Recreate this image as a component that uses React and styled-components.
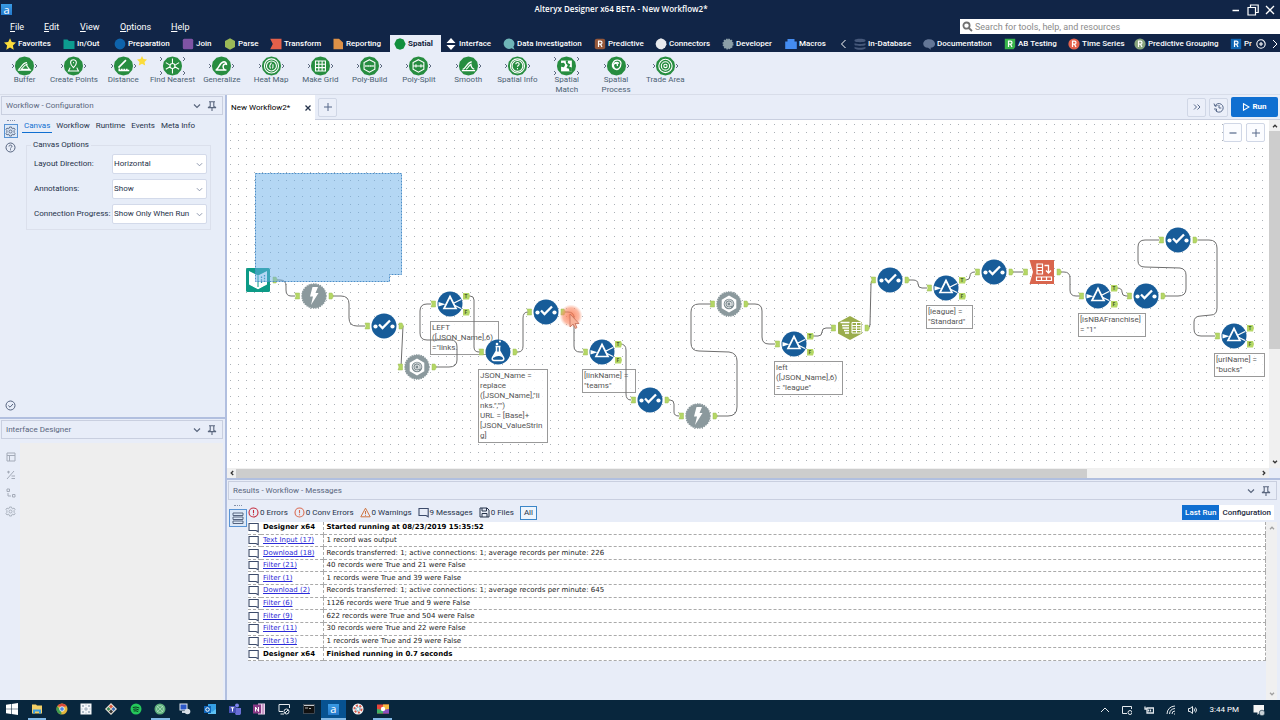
import React from 'react';
import styled, { createGlobalStyle, css } from 'styled-components';

const c = {
  navy: '#112547',
  panel: '#e8edf8',
  line: '#c9cfdf',
  edge: '#b1bfdf',
  blue: '#0f6fd1',
  slate: '#56688a',
  text: '#25324a',
  tool: '#175c99',
  grey: '#8b999d',
  port: '#b5d765',
};

const Global = createGlobalStyle`
  * { box-sizing: border-box; }
  body { margin: 0; background: ${c.panel}; }
  body, button, input, select, table, legend {
    font-family: Roboto, 'Open Sans', sans-serif;
    font-size: 8px;
    line-height: 10px;
    color: ${c.text};
  }
  button { border: 0; padding: 0; background: none; }
  svg { display: block; flex: none; }
`;

const App$ = styled.div`
  min-height: 100vh;
  display: flex;
  flex-direction: column;
`;

/* ---------- header ---------- */
const Header = styled.header`
  background: ${c.navy};
`;
const TitleBar = styled.div`
  display: flex;
  align-items: center;
  height: 19px;
  padding: 0 4px 0 1px;
`;
const Title = styled.h1`
  flex: 1;
  margin: 0;
  padding-bottom: 2px;
  text-align: center;
  color: #fff;
  font-family: 'Open Sans', sans-serif;
  font-size: 8px;
  font-weight: 600;
  line-height: 12px;
`;
const WindowButtons = styled.div`
  display: flex;
  gap: 5px;
`;
const MenuRow = styled.div`
  display: flex;
  justify-content: space-between;
  height: 16px;
`;
const Menu = styled.nav`
  display: flex;
  align-items: center;
  padding-left: 10px;
`;
const MenuItem = styled.button`
  width: ${(p) => p.$w}px;
  text-align: left;
  color: #fff;
  font-size: 9px;
  line-height: 12px;
`;
const SearchBox = styled.label`
  display: flex;
  align-items: center;
  gap: 2px;
  width: 25%;
  height: 15px;
  padding-left: 2px;
  background: #fff;
`;
const SearchInput = styled.input`
  flex: 1;
  min-width: 0;
  border: 0;
  padding: 0;
  font-size: 9px;
  outline: none;
  &::placeholder { color: #8a8a8a; opacity: 1; }
`;
const Categories = styled.nav`
  display: flex;
  height: 17px;
  overflow: hidden;
`;
const Category = styled.button`
  display: flex;
  align-items: center;
  flex: none;
  gap: 2px;
  width: ${(p) => p.$w}px;
  padding-left: 4px;
  overflow: hidden;
  white-space: nowrap;
  color: #fff;
  font-weight: 500;
  ${(p) => p.$active && css`
    background: ${c.panel};
    color: #14233c;
    font-weight: 700;
  `}
`;
const Palette = styled.div`
  display: grid;
  grid-template-columns: repeat(14, minmax(0, 1fr));
  width: 690px;
  height: 42px;
  padding-top: 4px;
`;
const PaletteBar = styled.div`
  background: ${c.panel};
  border-bottom: 1px solid #d8dde9;
`;
const Tool = styled.button`
  display: flex;
  flex-direction: column;
  align-items: center;
  justify-content: flex-start;
  gap: 0;
  color: #4b6173;
`;

/* ---------- workspace ---------- */
const Workspace = styled.div`
  flex: 1;
  display: grid;
  grid-template-columns: 227px minmax(0, 1fr);
`;
const Left = styled.aside`
  display: flex;
  flex-direction: column;
  border-right: 2px solid ${c.edge};
`;
const Panel = styled.section`
  display: flex;
  flex-direction: column;
  padding: 1px 2px 0 1px;
  ${(p) => (p.$grow ? css`flex: 1; border-bottom: 2px solid ${c.edge};` : css`min-height: 281px;`)}
`;
const PanelHeader = styled.div`
  display: flex;
  align-items: center;
  gap: 6px;
  height: 19px;
  padding: 0 5px 0 4px;
  border: 1px solid ${c.line};
  color: #59667d;
`;
const PanelTitle = styled.h2`
  flex: 1;
  margin: 0;
  font-size: 8px;
  font-weight: 400;
`;
const PanelBody = styled.div`
  flex: 1;
  display: flex;
`;
const Rail = styled.div`
  display: flex;
  flex-direction: column;
  align-items: center;
  width: 19px;
  gap: ${(p) => p.$gap || 2}px;
  padding: ${(p) => (p.$gap ? 11 : 5)}px 0 5px;
`;
const RailButton = styled.button`
  display: grid;
  place-items: center;
  flex: none;
  width: ${(p) => p.$size || 14}px;
  height: ${(p) => p.$size || 14}px;
  color: ${(p) => (p.$dim ? '#a4abb8' : '#56647f')};
  ${(p) => p.$active && css`border: 1px solid #5893d4; background: #dbe8f8;`}
  ${(p) => p.$last && css`margin-top: auto;`}
`;
const Grip = styled.div`
  width: 8px;
  height: 2px;
  border-top: 1px dotted #8390a8;
`;
const Config = styled.div`
  flex: 1;
  min-width: 0;
  padding: 5px 0 0 1px;
  background: #e7edf8;
`;
const SubTabs = styled.div`
  display: flex;
  gap: 2px;
  margin-right: 8px;
  padding-left: 1px;
`;
const SubTab = styled.button`
  height: 13px;
  padding: 0 2px 1px;
  white-space: nowrap;
  ${(p) => p.$active && css`color: ${c.blue}; border-bottom: 1px solid ${c.blue};`}
`;
const Options = styled.fieldset`
  margin: 7px 12px 0 5px;
  padding: 4px 3px 0 7px;
  border: 1px solid #dbe0ec;
`;
const Legend = styled.legend`
  margin-left: -3px;
  padding: 0 2px;
`;
const Field = styled.div`
  display: flex;
  align-items: center;
  justify-content: space-between;
  height: 20px;
  margin-bottom: 5px;
  white-space: nowrap;
`;
const SelectWrap = styled.div`
  position: relative;
  width: 95px;
`;
const SelectBox = styled.select`
  appearance: none;
  width: 100%;
  height: 20px;
  padding: 0 12px 1px 1px;
  border: 1px solid #d3daea;
  border-radius: 2px;
  background: #fff;
`;
const SelectMark = styled.span`
  position: absolute;
  right: 4px;
  top: 7px;
  pointer-events: none;
  color: #7f8aa3;
`;
const EmptyArea = styled.div`
  flex: 1;
  margin-top: 4px;
  background: #eeeeee;
`;

/* ---------- document area ---------- */
const Main = styled.main`
  display: flex;
  flex-direction: column;
  min-width: 0;
`;
const DocBar = styled.div`
  display: flex;
  align-items: center;
  gap: 3px;
  height: 25px;
  padding-right: 2px;
  border-bottom: 1px solid ${c.line};
`;
const DocTab = styled.div`
  display: flex;
  align-items: center;
  justify-content: space-between;
  width: 88px;
  height: 25px;
  margin-bottom: -1px;
  padding: 0 3px 0 4px;
  background: #fff;
  color: #000;
`;
const IconButton = styled.button`
  display: grid;
  place-items: center;
  width: 19px;
  height: 19px;
  border: 1px solid #d0d7e6;
  border-radius: 2px;
  background: ${(p) => (p.$white ? '#fbfcff' : '#ebeff9')};
  color: ${c.slate};
  ${(p) => p.$push && css`margin-left: auto;`}
`;
const RunButton = styled.button`
  display: flex;
  align-items: center;
  justify-content: center;
  gap: 2px;
  width: 47px;
  height: 20px;
  border-radius: 2px;
  background: ${c.blue};
  color: #fff;
  font-weight: 700;
`;
const CanvasRow = styled.div`
  flex: 1;
  display: flex;
  min-height: 347px;
`;
const Canvas = styled.div`
  position: relative;
  flex: 1;
  overflow: hidden;
  background-color: #fff;
  background-image: conic-gradient(from 90deg at 7px 7px, #aab0b6 90deg, transparent 0);
  background-size: 8px 8px;
  background-position: 4px 5px;
`;
const Wires = styled.svg`
  position: absolute;
  inset: 0;
  width: 100%;
  height: 100%;
  pointer-events: none;
`;
const Node = styled.div`
  position: absolute;
  left: ${(p) => p.$x - 22}px;
  top: ${(p) => p.$y - 14}px;
`;
const Note = styled.div`
  position: absolute;
  left: ${(p) => p.$x}px;
  top: ${(p) => p.$y}px;
  width: ${(p) => p.$w}px;
  padding: 1px;
  border: 1px solid #999;
  background: rgba(255, 255, 255, 0.8);
  color: #555;
  white-space: pre;
`;
const Zoom = styled.div`
  position: absolute;
  right: 4px;
  top: 3px;
  display: flex;
  gap: 4px;
`;
const VScroll = styled.div`
  display: flex;
  flex-direction: column;
  align-items: center;
  justify-content: space-between;
  width: 11px;
  padding: 3px 0;
  background: #f0f0f0;
  color: ${(p) => (p.$dim ? '#a0a0a0' : '#333')};
`;
const VThumb = styled.div`
  width: 11px;
  height: 218px;
  margin: 2px 0 auto;
  background: #cdcdcd;
`;
const HScroll = styled.div`
  display: flex;
  align-items: center;
  height: 10px;
  margin-right: 11px;
  padding: 0 2px;
  background: #f0f0f0;
  color: #333;
`;
const HThumb = styled.div`
  width: 82%;
  height: 9px;
  margin: 0 auto 0 1px;
  background: #cdcdcd;
`;

/* ---------- results ---------- */
const Results = styled.section`
  display: flex;
  flex-direction: column;
  height: 222px;
  padding: 1px 3px 0 1px;
  border-top: 2px solid ${c.edge};
`;
const ResultsBody = styled.div`
  flex: 1;
  display: flex;
`;
const ResultsMain = styled.div`
  flex: 1;
  display: flex;
  flex-direction: column;
  min-width: 0;
  padding: 4px 0 0 1px;
`;
const Filters = styled.div`
  display: flex;
  align-items: center;
  height: 17px;
  margin-bottom: 1px;
  padding-right: 3px;
  gap: 6px;
`;
const FilterButton = styled.button`
  display: flex;
  align-items: center;
  gap: 1px;
  white-space: nowrap;
  ${(p) => p.$box && css`
    padding: 1px 3px;
    border: 1px solid #3b86c8;
    background: #eef5fd;
  `}
`;
const Toggle = styled.div`
  display: flex;
  margin-left: auto;
`;
const ToggleButton = styled.button`
  height: 15px;
  padding: 0 3px;
  font-weight: 500;
  background: ${(p) => (p.$on ? c.blue : '#fff')};
  color: ${(p) => (p.$on ? '#fff' : '#1b2940')};
`;
const LogArea = styled.div`
  flex: 1;
  display: flex;
  align-items: flex-start;
  & > ${VScroll} { align-self: stretch; }
`;
const Log = styled.table`
  flex: 1;
  height: 139px;
  border-collapse: collapse;
  background: #fff;
  font-family: 'DejaVu Sans', sans-serif;
  font-size: 7px;
  line-height: 9px;
  color: #222;
  border-right: 1px dashed #aaa;
`;
const LogRow = styled.tr`
  border-bottom: 1px dashed #aaa;
  font-weight: ${(p) => (p.$bold ? 700 : 400)};
  color: ${(p) => (p.$bold ? '#000' : '#222')};
`;
const Cell = styled.td`
  width: ${(p) => (p.$w ? `${p.$w}px` : 'auto')};
  padding: 0 0 0 ${(p) => p.$pad}px;
  white-space: nowrap;
  ${(p) => p.$line && css`border-right: 1px dashed #aaa;`}
`;
const LogLink = styled.a`
  color: #2a2ad8;
  text-decoration: underline;
`;

/* ---------- taskbar ---------- */
const Taskbar = styled.footer`
  display: flex;
  justify-content: space-between;
  height: 20px;
  background: #08263d;
`;
const Apps = styled.div`
  display: grid;
  grid-template-columns: repeat(16, minmax(0, 1fr));
  width: 395px;
`;
const AppButton = styled.button`
  display: grid;
  place-items: center;
  margin: 0 ${(p) => (p.$on ? 0 : 3)}px;
  border-bottom: 2px solid ${(p) => (p.$open ? '#83b9e6' : 'transparent')};
  ${(p) => p.$on && css`background: #075291;`}
`;
const Tray = styled.div`
  display: flex;
  align-items: center;
  gap: 12px;
  padding-right: 15px;
  color: #e4e9ee;
`;
const Clock = styled.time`
  margin-right: 2px;
  color: #fff;
  white-space: nowrap;
`;

/* ---------- small drawings ---------- */
const Line = ({ d, s = 10, w = 1, vb = 10, fill = 'none' }) => (
  <svg width={s} height={s} viewBox={`0 0 ${vb} ${vb}`} fill={fill} stroke="currentColor" strokeWidth={w} aria-hidden="true">
    <path d={d} />
  </svg>
);
const Chevron = () => <Line s={8} vb={8} w={1.2} d="M1 2.500 L4 5.500 L7 2.500" />;
const Pin = () => <Line d="M2 .8H8M3.200 1V5.500L1 6.600H9L6.800 5.500V1M5 7V10" w={1.1} />;
const Arrow = ({ d }) => <Line s={6} vb={6} w={1.3} d={d} />;
const Gear = () => (
  <svg width="11" height="11" viewBox="0 0 22 22" fill="none" stroke="currentColor" strokeWidth="1.8" aria-hidden="true">
    <path d="M9 2h4l.7 2.700 1.900.8L18 4l2 3-1.800 2v3.800L20 15l-2 3-2.500-1.500-1.800.8L13 20H9l-.7-2.700-1.900-.8L4 18l-2-3 1.800-2.200V9L2 7l2-3 2.500 1.500 1.800-.8Z" />
    <circle cx="11" cy="11" r="3" />
  </svg>
);

const catIcons = {
  star: <path fill="#fbdc3b" d="M6 .3 7.800 4.100 12 4.600 8.900 7.500 9.700 11.700 6 9.600 2.300 11.700 3.100 7.500 0 4.600 4.200 4.100Z" />,
  folder: <path fill="#0d9c90" d="M.5 1.500H4.500L6 3H11.500V11H.5Z" />,
  circle: <circle cx="6" cy="6" r="5.400" fill="#0e63ab" />,
  square: <rect x=".8" y=".8" width="10.400" height="10.400" rx="1.500" fill="#7f54a4" />,
  hex: <path fill="#9bb957" d="M6 .2 11 3V9L6 11.800 1 9V3Z" />,
  flag: <path fill="#e4604a" d="M.2.8H11.500V11.200H.2L2.800 6Z" />,
  doc: <path fill="#dd9147" d="M1.500.8H7L11 4.500V11.200H1.500Z" />,
  deca: <path fill="#128f3d" d="M6 .3 9.500 1.600 11.700 6 9.500 10.400 6 11.700 2.500 10.400.3 6 2.500 1.600Z" />,
  updown: <path fill="#fff" d="M6 0 10.500 5H1.500ZM1.500 7H10.500L6 12Z" />,
  magnifier: <path fill="#6fb5b8" d="M6 .4a5.300 5.300 0 1 0 2.600 9.900L11.600 11.700 10.400 8.800A5.300 5.300 0 0 0 6 .4Z" />,
  cloud: <path fill="#e8eaee" d="M3.500 1.200 6 .3 9 1.500 11 3.500 11.500 6.500 10 9.500 7 11.500 4 10.900 1.500 9 .6 6 1.500 3Z" />,
  cog: <circle cx="6" cy="6" r="4.800" fill="#8c9fa8" stroke="#8c9fa8" strokeWidth="1.400" strokeDasharray="1.500 1" />,
  box: <path fill="#448cf0" d="M2.500 1H9.500V3.500H11.800V11H.2V3.500H2.500Z" />,
  db: (
    <g fill="#46587a">
      <path d="M.5 2.200C.5.200 11.500.200 11.500 2.200V3C11.500 4.600.5 4.600.5 3Z" />
      <path d="M.5 5.200C3 6.200 9 6.200 11.500 5.200V7C9 8.200 3 8.200.5 7Z" />
      <path d="M.5 9C3 10 9 10 11.500 9V10.500C9 12.200 3 12.200.5 10.500Z" />
    </g>
  ),
  bubble: <path fill="#637696" d="M6 1.200C13.800 1.200 13.800 9.800 7.500 9.800L8 11.800 5 9.800C-1.800 9.500-1.200 1.200 6 1.200Z" />,
};
const rShapes = {
  brown: <rect x=".8" y=".8" width="10.400" height="10.400" rx="2" fill="#96583a" />,
  green: <path fill="#37b54a" d="M.8.800H11.200V9L9.500 11.200H.8Z" />,
  red: <circle cx="6" cy="6" r="5.600" fill="#e5624d" />,
  sage: <circle cx="6" cy="6" r="5.600" fill="#88a57d" />,
  blue: <rect x=".8" y=".8" width="10.400" height="10.400" fill="#0f67b4" />,
};
const CatIcon = ({ name }) => (
  <svg width="12" height="12" viewBox="0 0 12 12" aria-hidden="true">
    {catIcons[name] || rShapes[name]}
    {rShapes[name] && (
      <path d="M4.500 9V3.200H6.500a1.500 1.500 0 0 1 0 3H4.500M6.500 6.200 8 9" fill="none" stroke="#fff" strokeWidth="1.200" />
    )}
  </svg>
);

const categories = [
  ['star', 'Favorites', 59],
  ['folder', 'In/Out', 51],
  ['circle', 'Preparation', 68],
  ['square', 'Join', 42],
  ['hex', 'Parse', 46],
  ['flag', 'Transform', 62],
  ['doc', 'Reporting', 62],
  ['deca', 'Spatial', 51],
  ['updown', 'Interface', 58],
  ['magnifier', 'Data Investigation', 91],
  ['brown', 'Predictive', 61],
  ['cloud', 'Connectors', 67],
  ['cog', 'Developer', 63],
  ['box', 'Macros', 54],
  ['prev', '', 15],
  ['db', 'In-Database', 69],
  ['bubble', 'Documentation', 81],
  ['green', 'AB Testing', 64],
  ['red', 'Time Series', 66],
  ['sage', 'Predictive Grouping', 96],
  ['blue', 'Pr', 26],
];

const glyphs = {
  buffer: <path d="M5 16c3-1 4-8 10-8M8 16c2-1 3-5 7-6v2l3 4ZM4 17h16" />,
  point: <path d="M12 4.500a3.500 3.500 0 0 1 3.500 3.500c0 2.500-3.500 6-3.500 6S8.500 10.500 8.500 8A3.500 3.500 0 0 1 12 4.500ZM8 14l-2 4h12l-2-4M11.500 8h1" />,
  distance: <path d="M6 14 15 5M6 17.500h13M7 15v3M10 15.500v2M13 15.500v2M16 15.500v2" strokeWidth="2" />,
  nearest: <path d="M12 9a3 3 0 1 1 0 6 3 3 0 0 1 0-6M12 3v6M12 15v6M4 8l5 3M15 13l5 3M20 8l-5 3M9 13l-5 3" />,
  wave: <path d="M5 17c4-1 4-9 10-10 2 0 3 2 3 3-3-1-4 1-4 3 0 2 2 4 4 4Z" strokeWidth="1.800" />,
  smooth: <path d="M4 17.500h16M5 16c5-1 5-9 11-9M9 16c3-1 3-5 6-6 0 3 1 5 4 6" strokeWidth="1.500" />,
  heat: <path d="M12 3.500a8.500 8.500 0 1 1 0 17 8.500 8.500 0 0 1 0-17M12 6a6 6 0 1 1 0 12 6 6 0 0 1 0-12M12 8c-2 3-3 4-1 7M14 10c-1 2 1 3-1 5" />,
  grid: <path d="M6 6h12v12H6ZM10 6v12M14 6v12M6 10h12M6 14h12" />,
  build: <path d="M12 4.500 18.500 8v8L12 19.500 5.500 16V8ZM7 12h10M7.500 11v2M10.500 11v2M13.500 11v2M16.500 11v2" />,
  split: <path d="M12 4.500 18.500 8v8L12 19.500 5.500 16V8ZM5 12h14M9 10v4M15 10v4" />,
  info: <path d="M12 3.500a8.500 8.500 0 1 1 0 17 8.500 8.500 0 0 1 0-17M12 5.500a6.500 6.500 0 1 1 0 13 6.500 6.500 0 0 1 0-13M10 10c0-3 4.500-2.500 4 0-.3 1.500-2 1.500-2 3M12 14.500v1.500" />,
  match: (
    <g stroke="none">
      <path fill="#fff" d="M5.500 5.500h13v13h-13Z" />
      <path fill="#278d40" d="M5.500 8.500 9 8l1.500 2.500L9 13.500l-3.500-.500ZM11 5.500h3l-.500 3 3 1.500-1 3 3 1v4.500h-3l-.500-3-3-1 1.500-3.500-2-2Z" />
    </g>
  ),
  process: <path d="M13 5a4 4 0 0 1 4 6 5 5 0 1 1-9-3 5 5 0 0 1 5-3M15 9a4 4 0 1 0 0 6M10 8a3 3 0 0 1 3 4" strokeWidth="1.600" />,
  trade: <path d="M12 4a8 8 0 1 1 0 16 8 8 0 0 1 0-16M12 7a5 5 0 1 1 0 10 5 5 0 0 1 0-10M12 10a2 2 0 1 1 0 4 2 2 0 0 1 0-4" />,
};
const tools = [
  ['buffer', 'Buffer'],
  ['point', 'Create Points'],
  ['distance', 'Distance', 'star'],
  ['nearest', 'Find Nearest', 'four'],
  ['wave', 'Generalize'],
  ['heat', 'Heat Map'],
  ['grid', 'Make Grid'],
  ['build', 'Poly-Build'],
  ['split', 'Poly-Split'],
  ['smooth', 'Smooth'],
  ['info', 'Spatial Info'],
  ['match', 'Spatial\nMatch', 'four'],
  ['process', 'Spatial\nProcess'],
  ['trade', 'Trade Area'],
];
const ToolLabel = styled.span`
  margin-top: -1px;
  white-space: pre;
  text-align: center;
`;
const ToolIcon = ({ name, extra }) => (
  <svg width="49" height="20" viewBox="0 0 49 20" fill="none" aria-hidden="true">
    <g transform="translate(14.500 0) scale(.83)">
      <path d="M12 .5 18 2 22.500 7 23.500 12 22.500 17 18 22 12 23.500 6 22 1.500 17 .5 12 1.500 7 6 2Z" fill="#278d40" />
      <g stroke="#fff" strokeWidth="1.300">{glyphs[name]}</g>
    </g>
    <path
      stroke="#5d6a80"
      d={extra === 'four'
        ? 'M12 1l2 2-2 2M12 15l2 2-2 2M35 1l2 2-2 2M35 15l2 2-2 2'
        : 'M12 8l2 2-2 2M35 8l2 2-2 2'}
    />
    {extra === 'star' && (
      <path fill="#fbdc3b" d="M43 0 44.500 3 48 3.500 45.500 6 46.200 9.500 43 7.800 39.800 9.500 40.500 6 38 3.500 41.500 3Z" />
    )}
  </svg>
);

/* canvas tools, drawn around the centre of a 44 x 28 box */
const discs = {
  select: (
    <g>
      <circle cx="22" cy="14" r="12.500" fill={c.tool} />
      <circle cx="13.500" cy="14.500" r="2.100" fill="#fff" />
      <circle cx="30.500" cy="14.500" r="2.100" fill="#fff" />
      <path d="M17 12.500 20.500 16 28 8.500" fill="none" stroke="#fff" strokeWidth="2.300" />
    </g>
  ),
  filter: (
    <g stroke="#fff" fill="none">
      <circle cx="22" cy="14" r="12.500" fill={c.tool} stroke="none" />
      <path d="M22 6.500 28 18.500H16Z" strokeWidth="1.700" />
      <path d="M10.500 12 17.500 14.200 10.500 16.500Z" fill="#fff" stroke="none" />
      <path d="M26 13 33 9.500M27 15.500 33 18.500" strokeWidth="1.300" />
    </g>
  ),
  download: (
    <g>
      <circle cx="22" cy="14" r="12" fill={c.grey} stroke={c.grey} strokeWidth="1.400" strokeDasharray="1.400 .9" />
      <path d="M20.500 5H26L23.500 11H26.500L19 23 21 14.500H18Z" fill="#fff" />
    </g>
  ),
  json: (
    <g fill="none" stroke="#fff">
      <circle cx="22" cy="14" r="12" fill={c.grey} stroke={c.grey} strokeWidth="1.400" strokeDasharray="1.400 .9" />
      <path d="M22 5.500 29.300 9.700V18.300L22 22.500 14.700 18.300V9.700Z" fill="#fff" stroke="none" />
      <circle cx="22" cy="14" r="5.300" fill="#7d8b90" stroke="none" />
      <path d="M24 17.200A3.900 3.900 0 1 1 25.900 14C25.900 16 24 15.800 24 14.500V12.300M24 14a2 2 0 1 1-4 0 2 2 0 0 1 4 0" stroke="#fff" strokeWidth=".8" />
    </g>
  ),
  formula: (
    <g fill="none" stroke="#fff">
      <circle cx="22" cy="14" r="12.500" fill={c.tool} stroke="none" />
      <path d="M20.500 9V13L16.500 19.500C15.500 21.500 17 22.500 18 22.500H26C27 22.500 28.500 21.500 27.500 19.500L23.500 13V9M19.500 8.500H24.500" strokeWidth="1.500" />
      <path d="M20 13.500H24L27 19.500C22 17 21 18 17 20Z" fill="#fff" stroke="none" />
      <circle cx="21" cy="6" r="1.300" fill="#fff" stroke="none" />
      <circle cx="24" cy="3.500" r="1" fill="#fff" stroke="none" />
    </g>
  ),
  input: (
    <g>
      <rect x="10" y="2" width="24" height="24" rx="1.500" fill="#0c9a86" />
      <path d="M13 5 22 9.500 31 5V18.500L22 23.500 13 18.500Z" fill="#fff" />
      <path d="M22 9.500V21M15 20.500 22 24 29 20.500" fill="none" stroke="#0c9a86" />
      <path d="M25.500 10.500V17M28.500 9V15.500" stroke="#2b8fa8" strokeWidth="1.300" strokeDasharray="1.500 1.200" />
    </g>
  ),
  columns: (
    <g fill="none" stroke="#fff">
      <path d="M22 2 34 8.500V19.500L22 26 10 19.500V8.500Z" fill="#9aad4b" stroke="none" />
      <path d="M12.500 8.500H21.500M14 11.500H21M14.500 14H21M16 16.500H21M17 19H21" strokeWidth="1.500" />
      <path d="M24 8.500H33V19H24ZM24 11.500H33M24 14H33M24 16.500H33M28.500 8.500V19" />
    </g>
  ),
  transpose: (
    <g fill="none" stroke="#fff">
      <path d="M9.500 2H34V26H9.500L13 14Z" fill="#d9654d" stroke="none" />
      <path d="M17 6H22.500V16H17ZM17 9.500H22.500M17 12.500H22.500M16.500 19H31.500V22.500H16.500ZM21.500 19V22.500M26.500 19V22.500" strokeWidth="1.200" />
      <path d="M24.500 7.500H28.500V14.500M26 12.500 28.500 15 31 12.500" strokeWidth="1.300" />
    </g>
  ),
};
const PortMark = styled.text`
  font: 700 5px 'Open Sans', sans-serif;
  fill: #4a5c2a;
`;
const ToolNode = ({ kind, x, y }) => (
  <Node $x={x} $y={y}>
    <svg width="44" height="28" viewBox="0 0 44 28" aria-hidden="true">
      {kind !== 'input' && <path d="M3 11H7.500V17H3L4 14Z" fill={c.port} stroke="#9fbd59" strokeWidth=".5" />}
      {kind === 'filter' ? (
        <g>
          <path d="M35 3H41L42 6 41 9.500H35Z M35 19H41L42 22 41 25.500H35Z" fill={c.port} />
          <PortMark x="36.500" y="8">T</PortMark>
          <PortMark x="36.500" y="24">F</PortMark>
        </g>
      ) : (
        <path d="M37 11H40L41.500 14 40 17H37Z" fill={c.port} stroke="#9fbd59" strokeWidth=".5" />
      )}
      {discs[kind]}
    </svg>
  </Node>
);

const nodes = [
  ['input', 31, 160],
  ['download', 87, 176],
  ['select', 157, 206],
  ['json', 190, 247],
  ['filter', 223, 184],
  ['formula', 271, 232],
  ['select', 319, 192],
  ['filter', 375, 232],
  ['select', 423, 280],
  ['download', 471, 296],
  ['json', 502, 184],
  ['filter', 567, 224],
  ['columns', 623, 208],
  ['select', 663, 160],
  ['filter', 719, 168],
  ['select', 767, 152],
  ['transpose', 815, 152],
  ['filter', 871, 176],
  ['select', 919, 176],
  ['select', 951, 120],
  ['filter', 1007, 216],
];
const notes = [
  [203, 201, 69, 'LEFT\n([JSON_Name],6)\n="links.'],
  [251, 249, 70, 'JSON_Name =\nreplace\n([JSON_Name],"li\nnks.","")\nURL = [Base]+\n[JSON_ValueStrin\ng]'],
  [355, 249, 54, '[linkName] =\n"teams"'],
  [547, 241, 69, 'left\n([JSON_Name],6)\n= "league"'],
  [699, 185, 47, '[league] =\n"Standard"'],
  [851, 193, 68, '[isNBAFranchise]\n= "1"'],
  [987, 233, 51, '[urlName] =\n"bucks"'],
];
const wires = [
  'M50 160H53Q59 160 59 166V170Q59 176 64 176H68',
  'M105 176H114Q122 176 122 184V198Q122 206 130 206H138',
  'M176 206L174 247',
  'M209 247H222Q230 247 230 240V227Q230 220 224 220H200Q193 220 193 213V191Q193 184 200 184H204',
  'M241 176H243Q247 176 247 180V227Q247 232 252 232H254',
  'M290 232H291Q296 232 296 226V198Q296 192 301 192H302',
  'M337 192H341Q347 192 347 198V226Q347 232 353 232H356',
  'M393 224Q399 224 399 230V274Q399 280 404 280',
  'M441 280H443Q447 280 447 284V292Q447 296 452 296',
  'M489 296H501Q510 296 510 287V241Q510 233 502 232L472 231Q464 231 464 223V192Q464 184 472 184H485',
  'M521 184H528Q535 184 535 191V217Q535 224 542 224H548',
  'M586 216H591Q595 216 595 212Q595 208 599 208H605',
  'M641 208Q643 208 643 204L644 164Q644 160 646 160',
  'M681 160H686Q691 160 691 164Q691 168 695 168H700',
  'M738 160H739Q743 160 743 156Q743 152 748 152',
  'M786 152H796',
  'M834 152H837Q843 152 843 158V170Q843 176 849 176H853',
  'M890 168Q895 168 895 172Q895 176 899 176H901',
  'M937 176H951Q959 176 959 169V155Q959 149 953 148L918 147Q911 147 911 141V127Q911 120 918 120H932',
  'M971 120H982Q990 120 990 128V188Q990 195 984 195L974 196Q967 196 967 202V209Q967 216 974 216H988',
];

const log = [
  ['Designer x64', 'Started running at 08/23/2019 15:35:52', true],
  ['Text Input (17)', '1 record was output'],
  ['Download (18)', 'Records transferred: 1; active connections: 1; average records per minute: 226'],
  ['Filter (21)', '40 records were True and 21 were False'],
  ['Filter (1)', '1 records were True and 39 were False'],
  ['Download (2)', 'Records transferred: 1; active connections: 1; average records per minute: 645'],
  ['Filter (6)', '1126 records were True and 9 were False'],
  ['Filter (9)', '622 records were True and 504 were False'],
  ['Filter (11)', '30 records were True and 22 were False'],
  ['Filter (13)', '1 records were True and 29 were False'],
  ['Designer x64', 'Finished running in 0.7 seconds', true],
];
const Tint = styled.span`
  color: ${(p) => p.$c};
`;
const Message = () => <Tint $c="#3c4b6b"><Line s={11} vb={11} w={1.100} d="M1 1.500H10.200V9.800L8 8.500H1Z" /></Tint>;
const Alert = ({ color }) => (
  <Tint $c={color}><Line s={11} vb={11} d="M5.500 1a4.500 4.500 0 1 1 0 9 4.500 4.500 0 0 1 0-9M5.500 3V6.200M5.500 7.200V8.200" w={1.100} /></Tint>
);

const apps = [
  ['Start', <path fill="#fff" d="M0 1.700 5 1V5.700H0ZM5.600.9 12 0V5.700H5.600ZM0 6.300H5V11L0 10.300ZM5.600 6.300H12V12L5.600 11.100Z" />],
  ['File Explorer', <><path fill="#f3cf66" d="M1 1.500H5L6 2.500H11V10.500H1Z" /><path fill="#3f9fe0" d="M2 6.500H10V10.500H8V8.500H4V10.500H2Z" /></>, true],
  ['Chrome', <><circle cx="6" cy="6" r="5.500" fill="#e3b63b" /><path fill="#d9483b" d="M1.200 3.200A5.500 5.500 0 0 1 10.800 3.200L6 4Z" /><path fill="#3f9d51" d="M1.200 3.200 5 7.500 5.500 11.500A5.500 5.500 0 0 1 1.200 3.200" /><circle cx="6" cy="6" r="2.300" fill="#4b86e0" stroke="#fff" strokeWidth=".8" /></>],
  ['Tableau', <><rect x=".5" y=".5" width="11" height="11" fill="#f5f7fa" /><path d="M6 4V8M4 6H8M3 2V4M2 3H4M9 2V4M8 3H10M3 8V10M2 9H4M9 8V10M8 9H10M6 1.500V2.500M6 9.500V10.500M1.500 6H2.500M9.500 6H10.500" stroke="#6f879c" strokeWidth=".6" /></>],
  ['Git', <><path fill="#eee6da" d="M6 0 12 6 6 12 0 6Z" /><path fill="#d8583f" d="M6 1.500 8 3.500 6 5.500 4 3.500Z" /><path fill="#3f8a58" d="M3.500 4 5.500 6 3.500 8 1.500 6Z" /><path fill="#3c6cb5" d="M8.500 4 10.500 6 8.500 8 6.500 6Z" /><path fill="#333" d="M6 6.500 8 8.500 6 10.500 4 8.500Z" /></>],
  ['Spotify', <><circle cx="6" cy="6" r="5.500" fill="#25c95b" /><path d="M2.800 4.500Q6 3.300 9.300 5M3.200 6.300Q6 5.300 8.700 6.900M3.600 8Q6 7.300 8.200 8.600" fill="none" stroke="#0a3a20" /></>],
  ['Atom', <><circle cx="6" cy="6" r="5.500" fill="#5fb17c" /><circle cx="6" cy="6" r="3.500" fill="none" stroke="#b7e3c6" strokeWidth=".7" /><path d="M3 3 9 9M9 3 3 9" stroke="#b7e3c6" strokeWidth=".7" /></>, true],
  ['Remote', <><rect x="1" y="1" width="7" height="6" fill="#2b58c9" stroke="#dfe6f0" /><rect x="3" y="8" width="5" height="2" fill="#c9d3dd" /><circle cx="8.500" cy="8.500" r="2.800" fill="#d8dfe6" /></>],
  ['Outlook', <><rect x="4" y="1" width="8" height="10" fill="#35a0e4" /><path d="M4 6 8 9 12 6V11H4Z" fill="#5fc1f2" /><rect x="0" y="3" width="7" height="7" fill="#0f64b8" /><circle cx="3.500" cy="6.500" r="1.800" fill="none" stroke="#fff" /></>],
  ['Teams', <><circle cx="8" cy="2.500" r="2" fill="#7b83eb" /><path d="M6 5H12V9A3 3 0 0 1 6 10Z" fill="#6a6fd6" /><rect x="0" y="3" width="7" height="7" fill="#4751b5" /><path d="M1.800 4.800H5.200M3.500 4.800V8.500" stroke="#fff" /></>],
  ['OneNote', <><rect x="5" y=".5" width="7" height="11" fill="#e8cfe8" /><rect x="0" y="1.500" width="8" height="9" fill="#8a3a86" /><path d="M2.500 8.500V4L5.500 8.500V4" fill="none" stroke="#fff" /><path d="M10 1V11" stroke="#a86aa8" /></>],
  ['Display', <><path d="M5 8.500H1V1.500H11.500V5" fill="none" stroke="#e4e9ee" /><circle cx="8.500" cy="8.500" r="2.500" fill="none" stroke="#e4e9ee" /><path d="M2.500 11H6M7 10 10 7" stroke="#e4e9ee" /></>],
  ['Terminal', <><rect x=".5" y="1.500" width="11" height="9" fill="#111" stroke="#5f676f" strokeWidth=".6" /><path d="M1 2.500H11" stroke="#c5cacf" /><path d="M2 5H5M6 5.500H8" stroke="#ddd" strokeWidth=".8" /></>],
  ['Alteryx', 'a', true, true],
  ['Slack', <><circle cx="6" cy="6" r="5.500" fill="#f2f4f5" /><circle cx="6" cy="6" r="3.500" fill="none" stroke="#d8574a" strokeWidth="2" strokeDasharray="2 1.500" /><circle cx="6" cy="6" r="2" fill="none" stroke="#3a9bb5" strokeDasharray="1.500 1" /></>],
  ['Recorder', <><rect x="0" y="1.500" width="12" height="9" fill="#e7463c" /><path d="M6 1.500H12V6L6 8Z" fill="#f4b942" /><path d="M0 6 6 7 6 10.500H0Z" fill="#3fb165" /><path d="M12 6V10.500H6V7Z" fill="#8a4fc0" /><circle cx="6" cy="6" r="2.200" fill="#fff" /></>, true],
];
const Badge = styled.span`
  display: grid;
  place-items: center;
  width: 11px;
  height: 11px;
  background: linear-gradient(#3a9be4, #2479cc);
  color: #fff;
  font-family: 'Open Sans', sans-serif;
  font-size: 11px;
  line-height: 8px;
`;

const fields = [
  ['layout', 'Layout Direction:', 'Horizontal'],
  ['annotations', 'Annotations:', 'Show'],
  ['progress', 'Connection Progress:', 'Show Only When Run'],
];

const UP = 'M1 4.200 3 2.200 5 4.200';
const DOWN = 'M1 1.800 3 3.800 5 1.800';

export default function App() {
  return (
    <App$>
      <Global />
      <Header>
        <TitleBar>
          <Badge>a</Badge>
          <Title>Alteryx Designer x64 BETA - New Workflow2*</Title>
          <WindowButtons>
            <MenuItem $w={12} aria-label="Minimize"><Line s={12} vb={12} w={1.500} d="M2.500 6.500H9" /></MenuItem>
            <MenuItem $w={12} aria-label="Restore"><Line s={12} vb={12} w={1.200} d="M1 3.500H8.500V11H1ZM3.500 3.500V1H11.200V8.500H8.500" /></MenuItem>
            <MenuItem $w={12} aria-label="Close"><Line s={12} vb={12} w={1.300} d="M2 2 10 10M10 2 2 10" /></MenuItem>
          </WindowButtons>
        </TitleBar>
        <MenuRow>
          <Menu>
            <MenuItem $w={34}><u>F</u>ile</MenuItem>
            <MenuItem $w={36}><u>E</u>dit</MenuItem>
            <MenuItem $w={40}><u>V</u>iew</MenuItem>
            <MenuItem $w={51}><u>O</u>ptions</MenuItem>
            <MenuItem $w={30}><u>H</u>elp</MenuItem>
          </Menu>
          <SearchBox>
            <Tint $c="#707070"><Line s={11} vb={11} w={1.800} d="M4.500 1.500a3 3 0 1 1 0 6.200 3 3 0 0 1 0-6.200M6.800 7 10 10" /></Tint>
            <SearchInput type="search" aria-label="Search" placeholder="Search for tools, help, and resources" />
          </SearchBox>
        </MenuRow>
        <Categories>
          {categories.map(([icon, label, w]) => (
            <Category key={icon} $w={w} $active={label === 'Spatial'} aria-label={label || 'Previous'}>
              {icon === 'prev' ? <Line d="M6.500 1 2.500 5 6.500 9" /> : <CatIcon name={icon} />}
              {label}
            </Category>
          ))}
          <Category $w={14} aria-label="Add category">
            <Line d="M5 .8a4.200 4.200 0 1 1 0 8.400 4.200 4.200 0 0 1 0-8.400M5 3V7M3 5H7" w={1.100} />
          </Category>
          <Category $w={14} aria-label="Next"><Line d="M3 1 7 5 3 9" /></Category>
        </Categories>
        <PaletteBar>
          <Palette>
            {tools.map(([icon, label, extra]) => (
              <Tool key={label}>
                <ToolIcon name={icon} extra={extra} />
                <ToolLabel>{label}</ToolLabel>
              </Tool>
            ))}
          </Palette>
        </PaletteBar>
      </Header>

      <Workspace>
        <Left>
          <Panel $grow>
            <PanelHeader>
              <PanelTitle>Workflow - Configuration</PanelTitle>
              <Chevron />
              <Pin />
            </PanelHeader>
            <PanelBody>
              <Rail>
                <Grip />
                <RailButton $active aria-label="Settings"><Gear /></RailButton>
                <RailButton aria-label="Help">
                  <Line s={11} vb={11} d="M5.500 1a4.500 4.500 0 1 1 0 9 4.500 4.500 0 0 1 0-9M4 4.500C4 2.500 7 2.800 7 4.300 7 5.300 5.500 5.300 5.500 6.500M5.500 7.300V8.300" />
                </RailButton>
                <RailButton $last aria-label="Validate">
                  <Line s={11} vb={11} d="M5.500 1a4.500 4.500 0 1 1 0 9 4.500 4.500 0 0 1 0-9M3.300 5.500 5 7.200 8 4" />
                </RailButton>
              </Rail>
              <Config>
                <SubTabs role="tablist">
                  {['Canvas', 'Workflow', 'Runtime', 'Events', 'Meta Info'].map((t, i) => (
                    <SubTab key={t} role="tab" $active={i === 0}>{t}</SubTab>
                  ))}
                </SubTabs>
                <Options>
                  <Legend>Canvas Options</Legend>
                  {fields.map(([id, label, value]) => (
                    <Field key={id}>
                      <label htmlFor={id}>{label}</label>
                      <SelectWrap>
                        <SelectBox id={id}><option>{value}</option></SelectBox>
                        <SelectMark><Line s={7} vb={8} d="M1 2.500 4 5.500 7 2.500" /></SelectMark>
                      </SelectWrap>
                    </Field>
                  ))}
                </Options>
              </Config>
            </PanelBody>
          </Panel>
          <Panel>
            <PanelHeader>
              <PanelTitle>Interface Designer</PanelTitle>
              <Chevron />
              <Pin />
            </PanelHeader>
            <PanelBody>
              <Rail $gap={4}>
                <RailButton $dim aria-label="Layout view"><Line d="M1 1H9V9H1ZM1 3.500H9M3.500 3.500V9" /></RailButton>
                <RailButton $dim aria-label="Test view"><Line d="M1 9 8 1M1 2H4M2.500 .8V3.500M5.500 6H9M5.500 8.500H9" /></RailButton>
                <RailButton $dim aria-label="Tree view"><Line d="M1 1H3.500V3.500H1ZM6.500 6.500H9V9H6.500ZM2 5V8H5" /></RailButton>
                <RailButton $dim aria-label="Properties"><Gear /></RailButton>
              </Rail>
              <EmptyArea />
            </PanelBody>
          </Panel>
        </Left>

        <Main>
          <DocBar>
            <DocTab>
              New Workflow2*
              <button aria-label="Close tab"><Line s={8} vb={8} w={1.300} d="M1.500 1.500 6.500 6.500M6.500 1.500 1.500 6.500" /></button>
            </DocTab>
            <IconButton aria-label="New tab"><Line d="M5 1V9M1 5H9" /></IconButton>
            <IconButton $push aria-label="More"><Line s={8} vb={8} d="M1 1.500 3.500 4 1 6.500M4.500 1.500 7 4 4.500 6.500" /></IconButton>
            <IconButton aria-label="Schedule"><Line s={11} vb={11} d="M2 4A4.300 4.300 0 1 1 2.500 8.500M1 1.500 2 4.300 4.500 3.500M6 3V6H8.300M1 7H3.500V9.500" /></IconButton>
            <RunButton><Line s={8} vb={8} d="M1.500 .8 7 4 1.500 7.200Z" w={1.100} />Run</RunButton>
          </DocBar>
          <CanvasRow>
            <Canvas>
              {notes.map(([x, y, w, text]) => (
                <Note key={`${x}-${y}`} $x={x} $y={y} $w={w}>{text}</Note>
              ))}
              <Wires fill="none" stroke="#6e6e6e" aria-hidden="true">
                {wires.map((d) => <path key={d} d={d} />)}
              </Wires>
              {nodes.map(([kind, x, y]) => <ToolNode key={`${x}-${y}`} kind={kind} x={x} y={y} />)}
              <Wires aria-hidden="true">
                <path d="M28.500 53.500H174.500V154.500H162.500V161.500H28.500Z" fill="#6aafea" fillOpacity=".5" stroke="#4c8fc9" strokeDasharray="2 1" />
                <defs>
                  <radialGradient id="press">
                    <stop offset="0" stopColor="#fb6a3c" stopOpacity=".8" />
                    <stop offset=".7" stopColor="#fb8a64" stopOpacity=".6" />
                    <stop offset="1" stopColor="#fb9a78" stopOpacity="0" />
                  </radialGradient>
                </defs>
                <circle cx="344" cy="196" r="11.500" fill="url(#press)" />
                <path d="M343 194V207L346 204 348.500 208.500 350 207.500 348 203.500H352Z" fill="#f8b49b" stroke="#c4705a" strokeWidth=".8" />
              </Wires>
              <Zoom>
                <IconButton $white aria-label="Zoom out"><Line d="M1.500 5H8.500" w={1.200} /></IconButton>
                <IconButton $white aria-label="Zoom in"><Line d="M5 1V9M1 5H9" /></IconButton>
              </Zoom>
            </Canvas>
            <VScroll>
              <Arrow d={UP} />
              <VThumb />
              <Arrow d={DOWN} />
            </VScroll>
          </CanvasRow>
          <HScroll>
            <Arrow d="M4.200 1 2.200 3 4.200 5" />
            <HThumb />
            <Arrow d="M1.800 1 3.800 3 1.800 5" />
          </HScroll>
          <Results>
            <PanelHeader>
              <PanelTitle>Results - Workflow - Messages</PanelTitle>
              <Chevron />
              <Pin />
            </PanelHeader>
            <ResultsBody>
              <Rail>
                <Grip />
                <RailButton $active $size={18} aria-label="Messages">
                  <Line s={12} vb={12} d="M1 1H11V3.500H1ZM1 5H11V7.500H1ZM1 9H11V11.500H1Z" />
                </RailButton>
              </Rail>
              <ResultsMain>
                <Filters>
                  <FilterButton><Alert color="#c4293c" />0 Errors</FilterButton>
                  <FilterButton><Alert color="#d96a50" />0 Conv Errors</FilterButton>
                  <FilterButton>
                    <Tint $c="#cf7440"><Line s={11} vb={11} d="M5.500 1.200 10.200 9.800H.8ZM5.500 4V7M5.500 7.800V8.800" /></Tint>0 Warnings
                  </FilterButton>
                  <FilterButton><Message />9 Messages</FilterButton>
                  <FilterButton>
                    <Line s={11} vb={11} d="M1 1H8L10 3V10H1ZM3 1V4H7.500V1M3 10V6.500H8V10" />0 Files
                  </FilterButton>
                  <FilterButton $box>All</FilterButton>
                  <Toggle>
                    <ToggleButton $on>Last Run</ToggleButton>
                    <ToggleButton>Configuration</ToggleButton>
                  </Toggle>
                </Filters>
                <LogArea>
                  <Log>
                    <tbody>
                      {log.map(([source, text, bold]) => (
                        <LogRow key={source + text} $bold={bold}>
                          <Cell $w={13} $pad={0}><Message /></Cell>
                          <Cell $w={62} $pad={2} $line>{bold ? source : <LogLink href="#log">{source}</LogLink>}</Cell>
                          <Cell $pad={3}>{text}</Cell>
                        </LogRow>
                      ))}
                    </tbody>
                  </Log>
                  <VScroll $dim>
                    <Arrow d={UP} />
                    <Arrow d={DOWN} />
                  </VScroll>
                </LogArea>
              </ResultsMain>
            </ResultsBody>
          </Results>
        </Main>
      </Workspace>

      <Taskbar>
        <Apps>
          {apps.map(([name, art, open, on]) => (
            <AppButton key={name} aria-label={name} $open={open} $on={on}>
              {art === 'a' ? <Badge>a</Badge> : (
                <svg width="12" height="12" viewBox="0 0 12 12" aria-hidden="true">{art}</svg>
              )}
            </AppButton>
          ))}
        </Apps>
        <Tray>
          <Line d="M1 7 5 3 9 7" />
          <Line d="M5 8.500H.5V1.500H9.500V4M8 5.500a2 2 0 1 1 0 4 2 2 0 0 1 0-4" />
          <Line d="M3 3H9.500V8H3ZM1 1.500V4H3M4.500 4.500V6.500M6.500 4.500V6.500" w={1.300} />
          <Line d="M1 9A8 8 0 0 1 9 1M3.500 9A6 6 0 0 1 9 3.500M6 9A3 3 0 0 1 9 6M8 9H9" />
          <Line d="M.5 3.500H2L4.500 1.500V8.500L2 6.500H.5ZM6 3.500Q7 5 6 6.500M7.500 2.500Q9.500 5 7.500 7.500" />
          <Clock>3:44 PM</Clock>
          <svg width="12" height="12" viewBox="0 0 12 12" aria-hidden="true">
            <path d="M.5 1H11V8.500H7L4.500 11V8.500H.5Z" fill="#f4f4f4" />
            <circle cx="9" cy="9" r="2.800" fill="#c9d0d6" stroke="#08263d" strokeWidth=".6" />
          </svg>
        </Tray>
      </Taskbar>
    </App$>
  );
}
